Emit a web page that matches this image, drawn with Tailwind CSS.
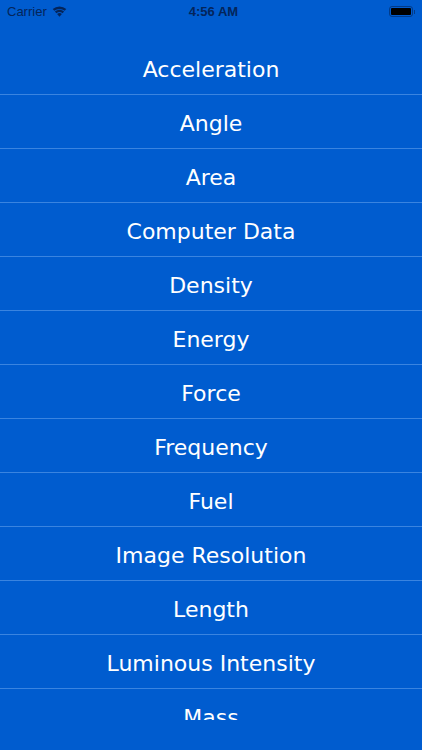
<!DOCTYPE html>
<html lang="en">
<head>
  <meta charset="UTF-8" />
  <title>Unit Converter</title>
  <meta name="viewport" content="width=device-width, initial-scale=1.0" />
  <script src="https://cdn.jsdelivr.net/npm/@tailwindcss/browser@4"></script>
</head>
<body class="bg-[#005ccf] w-[422px] h-[750px] overflow-hidden">
  <!-- status bar -->
  <div class="h-[22px] relative flex items-center justify-between pl-[7px] pr-[7px] pt-[1px] text-[#04255a] font-['Liberation_Sans',sans-serif] text-[13px]">
    <div class="flex items-center gap-[5px]">
      <span>Carrier</span>
      <svg width="15" height="11" viewBox="0 0 14 11" fill="#04255a">
        <path d="M7 10.8 L4.6 8 A3.6 3.6 0 0 1 9.4 8 Z" />
        <path d="M3.9 7.2 L2.4 5.5 A7 7 0 0 1 11.6 5.5 L10.1 7.2 A4.8 4.8 0 0 0 3.9 7.2 Z" />
        <path d="M1.8 4.8 L0.2 3 A10.4 10.4 0 0 1 13.8 3 L12.2 4.8 A8 8 0 0 0 1.8 4.8 Z" />
      </svg>
    </div>
    <span class="absolute left-0 right-0 pl-[5px] text-center font-bold">4:56 AM</span>
    <div class="flex items-center gap-[1px]">
      <div class="w-[24px] h-[11px] rounded-[3px] border border-[#04255a]/60 p-[1px]">
        <div class="w-full h-full rounded-[1px] bg-black"></div>
      </div>
      <div class="w-[1px] h-[4px] bg-[#04255a]/60"></div>
    </div>
  </div>

  <!-- list -->
  <div class="mt-[19px] h-[679px] overflow-hidden font-['DejaVu_Sans',sans-serif] text-[22px] text-white text-center">
    <div class="h-[54px] pt-[3px] border-b border-[#3a84e0] flex items-center justify-center">Acceleration</div>
    <div class="h-[54px] pt-[3px] border-b border-[#3a84e0] flex items-center justify-center">Angle</div>
    <div class="h-[54px] pt-[3px] border-b border-[#3a84e0] flex items-center justify-center">Area</div>
    <div class="h-[54px] pt-[3px] border-b border-[#3a84e0] flex items-center justify-center">Computer Data</div>
    <div class="h-[54px] pt-[3px] border-b border-[#3a84e0] flex items-center justify-center">Density</div>
    <div class="h-[54px] pt-[3px] border-b border-[#3a84e0] flex items-center justify-center">Energy</div>
    <div class="h-[54px] pt-[3px] border-b border-[#3a84e0] flex items-center justify-center">Force</div>
    <div class="h-[54px] pt-[3px] border-b border-[#3a84e0] flex items-center justify-center">Frequency</div>
    <div class="h-[54px] pt-[3px] border-b border-[#3a84e0] flex items-center justify-center">Fuel</div>
    <div class="h-[54px] pt-[3px] border-b border-[#3a84e0] flex items-center justify-center">Image Resolution</div>
    <div class="h-[54px] pt-[3px] border-b border-[#3a84e0] flex items-center justify-center">Length</div>
    <div class="h-[54px] pt-[3px] border-b border-[#3a84e0] flex items-center justify-center">Luminous Intensity</div>
    <div class="h-[54px] pt-[3px] border-b border-[#3a84e0] flex items-center justify-center">Mass</div>
  </div>
</body>
</html>
